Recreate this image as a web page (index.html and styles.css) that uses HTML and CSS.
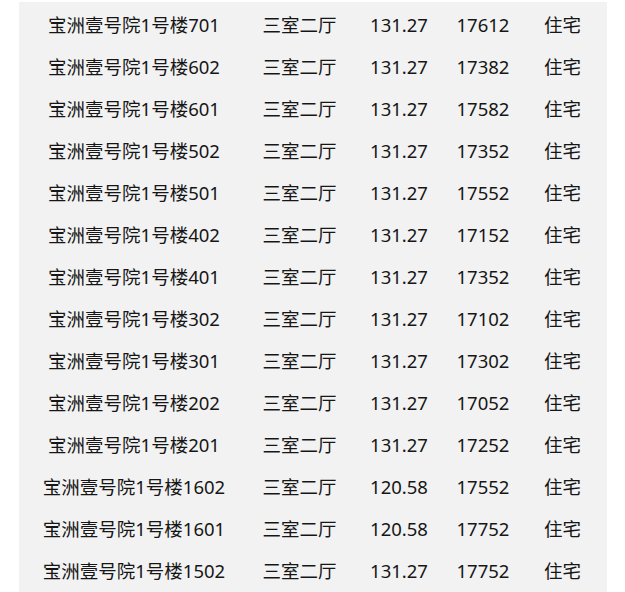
FILE: index.html
```html
<!DOCTYPE html>
<html lang="zh-CN">
<head>
<meta charset="utf-8">
<title>房源列表</title>
<link rel="stylesheet" href="styles.css">
</head>
<body>
<div class="panel">
  <div class="row"><span>宝洲壹号院1号楼701</span><span>三室二厅</span><span>131.27</span><span>17612</span><span>住宅</span></div>
  <div class="row"><span>宝洲壹号院1号楼602</span><span>三室二厅</span><span>131.27</span><span>17382</span><span>住宅</span></div>
  <div class="row"><span>宝洲壹号院1号楼601</span><span>三室二厅</span><span>131.27</span><span>17582</span><span>住宅</span></div>
  <div class="row"><span>宝洲壹号院1号楼502</span><span>三室二厅</span><span>131.27</span><span>17352</span><span>住宅</span></div>
  <div class="row"><span>宝洲壹号院1号楼501</span><span>三室二厅</span><span>131.27</span><span>17552</span><span>住宅</span></div>
  <div class="row"><span>宝洲壹号院1号楼402</span><span>三室二厅</span><span>131.27</span><span>17152</span><span>住宅</span></div>
  <div class="row"><span>宝洲壹号院1号楼401</span><span>三室二厅</span><span>131.27</span><span>17352</span><span>住宅</span></div>
  <div class="row"><span>宝洲壹号院1号楼302</span><span>三室二厅</span><span>131.27</span><span>17102</span><span>住宅</span></div>
  <div class="row"><span>宝洲壹号院1号楼301</span><span>三室二厅</span><span>131.27</span><span>17302</span><span>住宅</span></div>
  <div class="row"><span>宝洲壹号院1号楼202</span><span>三室二厅</span><span>131.27</span><span>17052</span><span>住宅</span></div>
  <div class="row"><span>宝洲壹号院1号楼201</span><span>三室二厅</span><span>131.27</span><span>17252</span><span>住宅</span></div>
  <div class="row"><span>宝洲壹号院1号楼1602</span><span>三室二厅</span><span>120.58</span><span>17552</span><span>住宅</span></div>
  <div class="row"><span>宝洲壹号院1号楼1601</span><span>三室二厅</span><span>120.58</span><span>17752</span><span>住宅</span></div>
  <div class="row"><span>宝洲壹号院1号楼1502</span><span>三室二厅</span><span>131.27</span><span>17752</span><span>住宅</span></div>
</div>
</body>
</html>
```

FILE: styles.css
```css
html, body {
  margin: 0;
  padding: 0;
  background: #ffffff;
}

.panel {
  margin: 2px 0 0 19px;
  padding-top: 2px;
  width: 588px;
  background: #f2f2f2;
  font-family: "Noto Sans", "Noto Sans CJK SC", sans-serif;
  font-size: 18.5px;
  color: #161616;
}

.row {
  display: grid;
  grid-template-columns: 230px 101px 98px 70px 89px;
  height: 42px;
  align-items: center;
}

.row span {
  text-align: center;
  white-space: nowrap;
  line-height: 42px;
}
```
